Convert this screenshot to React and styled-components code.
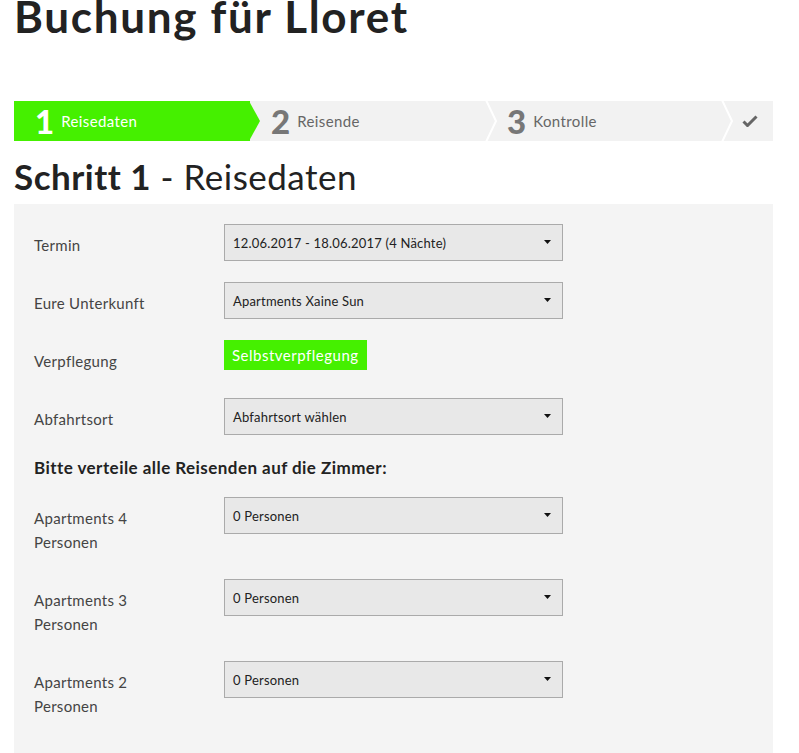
import React from "react";
import styled, { createGlobalStyle } from "styled-components";

const GlobalStyle = createGlobalStyle`
  body {
    margin: 0;
    background: #fff;
    font-family: Lato, "Open Sans", sans-serif;
    color: #222;
  }
`;

const steps = [
  { num: "1", label: "Reisedaten", active: true },
  { num: "2", label: "Reisende" },
  { num: "3", label: "Kontrolle" },
];

const fields = [
  { label: "Termin", value: "12.06.2017 - 18.06.2017 (4 Nächte)" },
  { label: "Eure Unterkunft", value: "Apartments Xaine Sun" },
  { label: "Verpflegung", badge: "Selbstverpflegung" },
  { label: "Abfahrtsort", value: "Abfahrtsort wählen" },
];

const rooms = ["Apartments 4 Personen", "Apartments 3 Personen", "Apartments 2 Personen"];

const Caret = () => (
  <svg width="7" height="4" viewBox="0 0 7 4">
    <path d="M0 0 H7 L3.5 4 Z" fill="#111" />
  </svg>
);

const Select = ({ children }) => (
  <SelectBox>
    <span>{children}</span>
    <Caret />
  </SelectBox>
);

const App = () => {
  return (
    <>
      <GlobalStyle />
      <Page>
        <Title>Buchung für Lloret</Title>

        <Stepper>
          {steps.map((s) => (
            <Step key={s.num} $active={s.active}>
              <StepNum $active={s.active}>{s.num}</StepNum>
              <StepLabel $active={s.active}>{s.label}</StepLabel>
              <Chevron width="12" height="40" viewBox="0 0 12 40">
                {s.active ? (
                  <path d="M0 0 L11 20 L0 40 Z" fill="#45f000" />
                ) : (
                  <path d="M1 -1 L11 20 L1 41" fill="none" stroke="#fff" strokeWidth="2" />
                )}
              </Chevron>
            </Step>
          ))}
          <DoneStep>
            <svg width="16" height="12" viewBox="0 0 16 12">
              <path d="M1.5 6.5 L5.5 10.5 L14.5 1.5" fill="none" stroke="#666" strokeWidth="3" />
            </svg>
          </DoneStep>
        </Stepper>

        <Heading>
          <strong>Schritt 1</strong> - Reisedaten
        </Heading>

        <Panel>
          {fields.map((f) => (
            <Row key={f.label}>
              <Label>{f.label}</Label>
              {f.badge ? <Badge>{f.badge}</Badge> : <Select>{f.value}</Select>}
            </Row>
          ))}
          <SubHeading>Bitte verteile alle Reisenden auf die Zimmer:</SubHeading>
          {rooms.map((r) => (
            <Row key={r}>
              <Label $narrow>{r}</Label>
              <Select>0 Personen</Select>
            </Row>
          ))}
        </Panel>
      </Page>
    </>
  );
};

export default App;

const Page = styled.div`
  padding: 0 26px 0 14px;
`;

const Title = styled.h1`
  margin: -10px 0 0;
  font-size: 44px;
  line-height: 52px;
  font-weight: 700;
  letter-spacing: 1.7px;
  color: #222;
`;

const Stepper = styled.div`
  display: flex;
  height: 40px;
  margin-top: 59px;
  background: #f2f2f2;
`;

const Step = styled.div`
  position: relative;
  flex: 0 0 236px;
  display: flex;
  align-items: center;
  padding-left: 21px;
  box-sizing: border-box;
  background: ${(p) => (p.$active ? "#45f000" : "transparent")};
`;

const StepNum = styled.span`
  font-size: 33px;
  font-weight: 900;
  color: ${(p) => (p.$active ? "#fff" : "#777")};
  margin-right: 7px;
`;

const StepLabel = styled.span`
  font-size: 15px;
  letter-spacing: 0.4px;
  color: ${(p) => (p.$active ? "#fff" : "#666")};
`;

const Chevron = styled.svg`
  position: absolute;
  top: 0;
  right: -11px;
  z-index: 1;
`;

const DoneStep = styled.div`
  flex: 1;
  display: flex;
  align-items: center;
  justify-content: flex-end;
  padding-right: 15px;
`;

const Heading = styled.h2`
  margin: 14px 0 7px;
  font-size: 35px;
  line-height: 42px;
  font-weight: 400;
  letter-spacing: 0.5px;
  color: #222;
  strong {
    font-weight: 700;
  }
`;

const Panel = styled.div`
  background: #f4f4f4;
  padding: 20px 20px 60px;
`;

const Row = styled.div`
  display: flex;
  align-items: flex-start;
  margin-bottom: 21px;
`;

const Label = styled.div`
  flex: 0 0 190px;
  width: 190px;
  padding: 9px ${(p) => (p.$narrow ? "80px" : "0")} 4px 0;
  box-sizing: border-box;
  font-size: 15px;
  line-height: 24px;
  letter-spacing: 0.3px;
  color: #444;
`;

const SelectBox = styled.div`
  width: 339px;
  height: 37px;
  box-sizing: border-box;
  border: 1px solid #aaa;
  background: #e8e8e8;
  display: flex;
  align-items: center;
  justify-content: space-between;
  padding: 0 11px 0 8px;
  font-size: 13px;
  letter-spacing: 0.2px;
  color: #222;
  svg {
    margin-top: -2px;
  }
`;

const Badge = styled.div`
  background: #45f000;
  color: #fff;
  font-size: 15px;
  letter-spacing: 0.5px;
  height: 30px;
  line-height: 30px;
  padding: 0 8px;
`;

const SubHeading = styled.div`
  font-size: 17px;
  font-weight: 700;
  line-height: 24px;
  letter-spacing: 0.45px;
  color: #222;
  margin-bottom: 17px;
`;
